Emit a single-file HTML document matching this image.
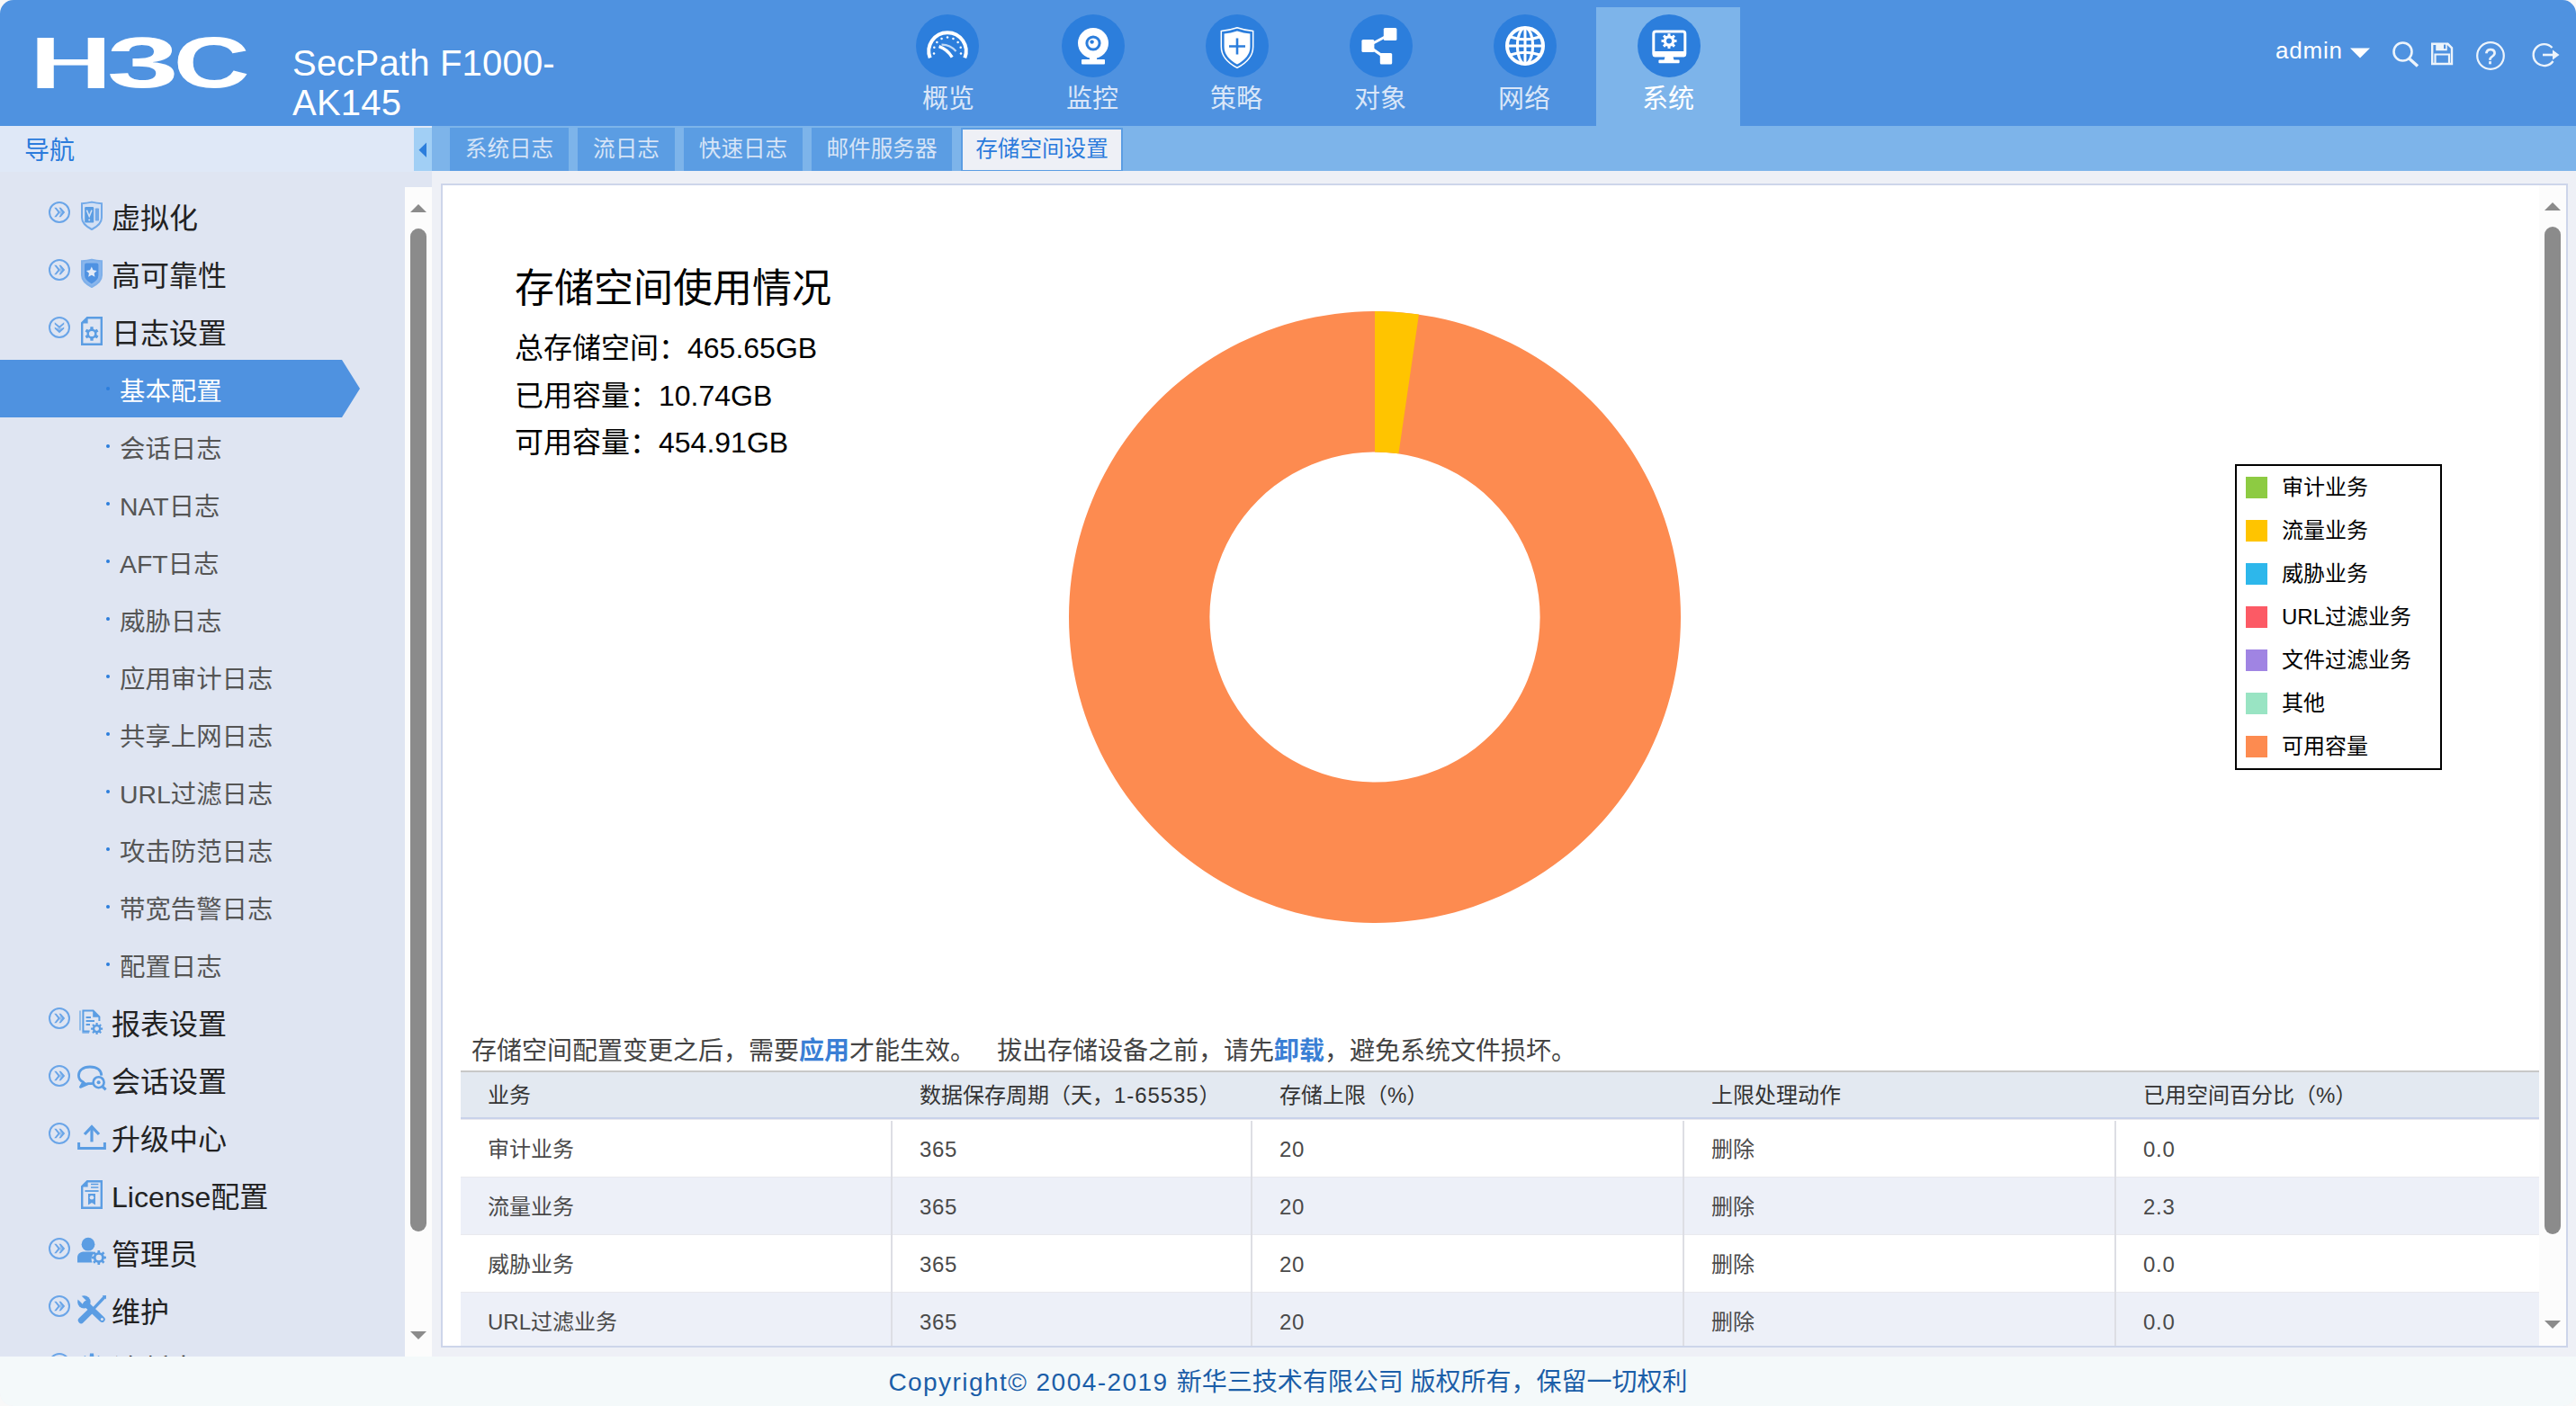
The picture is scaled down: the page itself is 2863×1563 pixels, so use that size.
<!DOCTYPE html>
<html lang="zh-CN">
<head>
<meta charset="utf-8">
<title>H3C SecPath F1000-AK145</title>
<style>
*{box-sizing:border-box;margin:0;padding:0}
html,body{width:2863px;height:1563px;overflow:hidden;background:#f8f8f8}
body{font-family:"Liberation Sans","Noto Sans CJK SC",sans-serif;color:#222}
#app{position:absolute;left:0;top:0;width:2863px;height:1563px;border-radius:15px;overflow:hidden;background:#eef0f6}
.abs{position:absolute}
/* header */
#hdr{position:absolute;left:0;top:0;width:2863px;height:140px;background:#4f92e0}
#prod{position:absolute;left:325px;top:48px;width:320px;font-size:40px;line-height:44px;color:#fff;letter-spacing:0.2px}
.nav{position:absolute;top:8px;width:160px;height:132px}
.nav.on{background:#7db4ea}
.nav .c{position:absolute;left:46px;top:8px;width:70px;height:70px;border-radius:50%;background:#2c7edc}
.nav .c svg{position:absolute;left:0;top:0;width:70px;height:70px}
.nav .t{position:absolute;left:0;top:82px;width:160px;text-align:center;font-size:29px;line-height:40px;color:#d9e6f8}
.nav.on .t{color:#fff}
#user{position:absolute;left:2529px;top:38px;letter-spacing:0.8px;font-size:26px;line-height:36px;color:#fff}
/* sub bars */
#navt{position:absolute;left:0;top:140px;width:480px;height:52px;background:#dfe8f7}
#navt span{position:absolute;left:27px;top:8px;font-size:28px;line-height:40px;color:#2b7bdc}
#coll{position:absolute;left:460px;top:142px;width:20px;height:48px;background:#a1cff5}
#tabs{position:absolute;left:480px;top:140px;width:2383px;height:50px;background:#7db4ea}
.tab{position:absolute;top:2px;height:48px;background:#5b9de3;color:#d6e4f7;font-size:24.6px;line-height:48px;text-align:center}
.tab.on{background:#eef0f6;color:#2b7bdc;border:2px solid #5b9de3;border-bottom-width:1px;line-height:44px}
/* sidebar */
#side{position:absolute;left:0;top:191px;width:480px;height:1317px;background:#dfe5f2;overflow:hidden}
#strack{position:absolute;left:450px;top:208px;width:30px;height:1300px;background:#fcfcfc}
.thumb{position:absolute;width:18px;border-radius:9px;background:#8b8b8b}
.row{position:absolute;left:0;width:450px;height:64px}
.row .lbl{position:absolute;left:124px;top:13px;font-size:32px;line-height:44px;color:#222;white-space:nowrap}
.row .ex{position:absolute;left:54px;top:16px;width:24px;height:24px}
.row .ic{position:absolute;left:84px;top:12px;width:36px;height:40px}
.sub .lbl{left:133px;top:15px;font-size:28.4px;line-height:40px;color:#555}
.sub .dot{position:absolute;left:118px;top:30px;width:4px;height:4px;border-radius:2px;background:#2c7edc}
.sub.on{background:none}
.sub.on .lbl{color:#fff}
/* panel */
#panel{position:absolute;left:490px;top:204px;width:2364px;height:1294px;border:2px solid #cdd5ea;background:#fff;overflow:hidden}
#ptrack{position:absolute;left:2822px;top:206px;width:30px;height:1290px;background:#fcfcfc}
.th{font-size:24px;line-height:52px;color:#333;white-space:nowrap}
.td.num{letter-spacing:0.7px}
.td{font-size:24px;line-height:68px;color:#4a4a4a;white-space:nowrap}
#note b{color:#3a7fd5}
#foot{position:absolute;left:0;top:1508px;width:2863px;height:55px;background:#f4f9fa;color:#1b5ea8;font-size:28px;line-height:58px;text-align:center}
</style>
</head>
<body>
<div id="app">
<div id="hdr">
<svg class="abs" style="left:30px;top:30px" width="260" height="80" viewBox="30 30 260 80"><defs><filter id="thin" x="-5%" y="-10%" width="110%" height="120%"><feMorphology operator="erode" radius="0 2"/></filter></defs><g font-family="'Liberation Sans',sans-serif" font-weight="bold" fill="#fff"><g filter="url(#thin)"><text transform="translate(33.0 100) scale(1.448 1)" font-size="87.5">H</text></g><text transform="translate(118.7 97.1) scale(1.816 1)" font-size="79.2">3</text><text transform="translate(192.8 97.2) scale(1.481 1)" font-size="79.4">C</text></g></svg>
<div id="prod">SecPath F1000-<br>AK145</div>
<div class="nav" style="left:974px"><div class="c" style="left:44px"><svg viewBox="0 0 70 70"><path d="M15.7 48.4 A20.7 20.7 0 1 1 54.3 48.4" fill="none" stroke="#fff" stroke-width="4"/><circle cx="20.03" cy="43.44" r="1.25" fill="#fff"/><circle cx="20.32" cy="36.87" r="1.25" fill="#fff"/><circle cx="23.36" cy="31.03" r="1.25" fill="#fff"/><circle cx="28.58" cy="27.02" r="1.25" fill="#fff"/><circle cx="35.00" cy="25.60" r="1.25" fill="#fff"/><circle cx="41.42" cy="27.02" r="1.25" fill="#fff"/><circle cx="46.64" cy="31.03" r="1.25" fill="#fff"/><circle cx="49.68" cy="36.87" r="1.25" fill="#fff"/><circle cx="49.97" cy="43.44" r="1.25" fill="#fff"/><path d="M40.2 47.6 Q34.5 38.5 25.6 35.6" fill="none" stroke="#fff" stroke-width="3.4"/><path d="M28.5 33.6 Q38 33.4 44.5 41" fill="none" stroke="#fff" stroke-width="2.2" opacity=".7"/></svg></div><div class="t">概览</div></div>
<div class="nav" style="left:1134px"><div class="c"><svg viewBox="0 0 70 70"><circle cx="35" cy="32" r="17" fill="#fff"/><circle cx="35" cy="32" r="8.6" fill="#2c7edc"/><circle cx="35" cy="32" r="5.6" fill="#fff"/><circle cx="33.6" cy="30.6" r="2.2" fill="#2c7edc"/><path d="M31 47 H39 V51 H31 Z" fill="#fff"/><rect x="22" y="50" width="26" height="5.4" rx="1" fill="#fff"/></svg></div><div class="t">监控</div></div>
<div class="nav" style="left:1294px"><div class="c"><svg viewBox="0 0 70 70"><path d="M17.3 18.6 Q27 17.6 35 14.8 Q43 17.6 52.7 18.6 V36 Q52.7 50 35 59.4 Q17.3 50 17.3 36 Z" fill="none" stroke="#fff" stroke-width="1.5"/><path d="M20.6 21.4 Q28 20.8 35 18.4 Q42 20.8 49.4 21.4 V36 Q49.4 47.6 35 55.6 Q20.6 47.6 20.6 36 Z" fill="#fff"/><path d="M35 26.5 V44.5 M26 35.5 H44" stroke="#2c7edc" stroke-width="2.6"/></svg></div><div class="t">策略</div></div>
<div class="nav" style="left:1454px"><div class="c"><svg viewBox="0 0 70 70"><path d="M45 22 L20.5 35 L40.5 49" fill="none" stroke="#fff" stroke-width="3"/><rect x="37.8" y="15" width="14.6" height="14" rx="1.6" fill="#fff"/><rect x="13.4" y="28" width="14" height="14" rx="1.6" fill="#fff"/><rect x="33.8" y="43" width="13.4" height="12.6" rx="1.6" fill="#fff"/></svg></div><div class="t">对象</div></div>
<div class="nav" style="left:1614px"><div class="c"><svg viewBox="0 0 70 70"><g fill="none" stroke="#fff"><circle cx="35" cy="35" r="20" stroke-width="4"/><ellipse cx="35" cy="35" rx="8.6" ry="20" stroke-width="3"/><path d="M35 15 V55 M15 35 H55" stroke-width="3"/><path d="M18.5 25 Q35 30.5 51.5 25 M18.5 45 Q35 39.5 51.5 45" stroke-width="3"/></g></svg></div><div class="t">网络</div></div>
<div class="nav on" style="left:1774px"><div class="c"><svg viewBox="0 0 70 70"><rect x="17.8" y="19" width="35" height="26.8" rx="2.4" fill="none" stroke="#fff" stroke-width="3"/><rect x="17" y="41" width="36.6" height="6.2" rx="2" fill="#fff"/><path d="M30.5 47 H39.5 L40.5 51 H29.5 Z" fill="#fff"/><rect x="23.4" y="50.6" width="23.2" height="3.6" rx="1" fill="#fff"/><path d="M33.52 21.13 L36.48 21.13 L36.45 23.57 L38.24 24.31 L39.95 22.56 L42.04 24.65 L40.29 26.36 L41.03 28.15 L43.47 28.12 L43.47 31.08 L41.03 31.05 L40.29 32.84 L42.04 34.55 L39.95 36.64 L38.24 34.89 L36.45 35.63 L36.48 38.07 L33.52 38.07 L33.55 35.63 L31.76 34.89 L30.05 36.64 L27.96 34.55 L29.71 32.84 L28.97 31.05 L26.53 31.08 L26.53 28.12 L28.97 28.15 L29.71 26.36 L27.96 24.65 L30.05 22.56 L31.76 24.31 L33.55 23.57 Z M32.0 29.6 a3.0 3.0 0 1 0 6.0 0 a3.0 3.0 0 1 0 -6.0 0 Z" fill="#fff" fill-rule="evenodd"/></svg></div><div class="t">系统</div></div>
<div id="user">admin</div>
<svg class="abs" style="left:2600px;top:36px" width="263" height="56" viewBox="2600 36 263 56"><path d="M2612 53.5 H2634 L2623 64.5 Z" fill="#fff"/><g opacity="0.9"><circle cx="2670.5" cy="57.5" r="10" fill="none" stroke="#fff" stroke-width="2.6"/><path d="M2677.5 65 L2687 73.5" stroke="#fff" stroke-width="3.4"/><path d="M2703.2 48.8 H2720.5 L2725 53.3 V71 H2703.2 Z" fill="none" stroke="#fff" stroke-width="2.4"/><path d="M2708 48.8 V55.5 H2719 V48.8" fill="#fff" stroke="#fff" stroke-width="1.5"/><rect x="2716" y="49.6" width="2.2" height="4.6" fill="#4f92e0"/><path d="M2706.5 71 V60.5 H2722 V71" fill="none" stroke="#fff" stroke-width="2.2"/><circle cx="2768" cy="62" r="14.8" fill="none" stroke="#fff" stroke-width="2.2"/><text x="2768" y="70.5" text-anchor="middle" font-family="'Liberation Sans',sans-serif" font-size="23" fill="#fff" stroke="#fff" stroke-width="0.6">?</text><path d="M2836.5 53 A12 12 0 1 0 2837.5 68" fill="none" stroke="#fff" stroke-width="2.4"/><path d="M2826 61 H2838" stroke="#fff" stroke-width="2.6"/><path d="M2837 55.5 L2844.5 61 L2837 66.5 Z" fill="#fff"/></g></svg>
</div>
<div id="navt"><span>导航</span></div>
<div id="coll"><svg width="20" height="48" viewBox="0 0 20 48"><path d="M5.5 24.7 L14 16.5 L14 33 Z" fill="#2c7edc"/></svg></div>
<div id="tabs">
<div class="tab" style="left:20px;width:132px">系统日志</div>
<div class="tab" style="left:162px;width:108px">流日志</div>
<div class="tab" style="left:280px;width:132px">快速日志</div>
<div class="tab" style="left:422px;width:156px">邮件服务器</div>
<div class="tab on" style="left:588px;width:180px">存储空间设置</div>
</div>
<div id="side">
<div class="row" style="top:17px"><svg class="ex" viewBox="0 0 24 24"><circle cx="12" cy="12" r="11" fill="none" stroke="#6aa5e8" stroke-width="2"/><path d="M6.2 6.8 L8.6 6.8 L13 12 L8.6 17.2 L6.2 17.2 L10.4 12 Z M11.4 6.8 L13.6 6.8 L18.2 12 L13.6 17.2 L11.4 17.2 L15.4 12 Z" fill="#6aa5e8"/><path d="M12.6 8 L17 12 L12.6 16 Z" fill="#6aa5e8" opacity=".55"/></svg><svg class="ic" viewBox="84 12 36 40"><path d="M91 18.2 Q96.5 18 102 16.6 Q107.5 18 113 18.2 V34 Q113 41.5 102 47 Q91 41.5 91 34 Z" fill="#d3e0f4" stroke="#72a9e8" stroke-width="2"/><rect x="94.2" y="22" width="10" height="17.6" rx="1.2" fill="#5b9de3"/><rect x="105.8" y="23.5" width="4.2" height="14" rx="0.8" fill="#72a9e8"/><path d="M96.4 25.6 L99.2 32.6 L102 25.6" stroke="#d3e0f4" stroke-width="1.5" fill="none"/><circle cx="99.2" cy="36.6" r="1" fill="#d3e0f4"/></svg><span class="lbl">虚拟化</span></div>
<div class="row" style="top:81px"><svg class="ex" viewBox="0 0 24 24"><circle cx="12" cy="12" r="11" fill="none" stroke="#6aa5e8" stroke-width="2"/><path d="M6.2 6.8 L8.6 6.8 L13 12 L8.6 17.2 L6.2 17.2 L10.4 12 Z M11.4 6.8 L13.6 6.8 L18.2 12 L13.6 17.2 L11.4 17.2 L15.4 12 Z" fill="#6aa5e8"/><path d="M12.6 8 L17 12 L12.6 16 Z" fill="#6aa5e8" opacity=".55"/></svg><svg class="ic" viewBox="84 12 36 40"><path d="M91 18.2 Q96.5 18 102 16.6 Q107.5 18 113 18.2 V34 Q113 41.5 102 47 Q91 41.5 91 34 Z" fill="#8ab6ec" stroke="#7fb0ea" stroke-width="2"/><path d="M94 22.4 Q94 20.4 96 20.4 H107.4 Q109.4 20.4 109.4 22.4 V34 Q109.4 39.4 101.8 43.4 Q94 39.4 94 34 Z" fill="#4f92e2"/><path d="M101.80 24.60 L103.56 28.37 L107.70 28.88 L104.65 31.73 L105.44 35.82 L101.80 33.80 L98.16 35.82 L98.95 31.73 L95.90 28.88 L100.04 28.37 Z" fill="#e3ebf8"/></svg><span class="lbl">高可靠性</span></div>
<div class="row" style="top:145px"><svg class="ex" viewBox="0 0 24 24"><circle cx="12" cy="12" r="11" fill="none" stroke="#6aa5e8" stroke-width="2"/><path d="M6.8 6.2 L6.8 8.6 L12 13 L17.2 8.6 L17.2 6.2 L12 10.4 Z M6.8 11.4 L6.8 13.6 L12 18.2 L17.2 13.6 L17.2 11.4 L12 15.4 Z" fill="#6aa5e8"/><path d="M8 12.6 L12 17 L16 12.6 Z" fill="#6aa5e8" opacity=".55"/></svg><svg class="ic" viewBox="84 12 36 40"><path d="M97 17.2 H112.8 V46.8 H91.2 V23 Z" fill="none" stroke="#5b9de3" stroke-width="2.4"/><path d="M90.6 23.6 L97.6 16.6 V23.6 Z" fill="#5b9de3"/><path d="M100.38 27.37 L103.62 27.37 L103.73 29.67 L105.75 30.84 L107.80 29.78 L109.42 32.59 L107.48 33.84 L107.48 36.16 L109.42 37.41 L107.80 40.22 L105.75 39.16 L103.73 40.33 L103.62 42.63 L100.38 42.63 L100.27 40.33 L98.25 39.16 L96.20 40.22 L94.58 37.41 L96.52 36.16 L96.52 33.84 L94.58 32.59 L96.20 29.78 L98.25 30.84 L100.27 29.67 Z M98.9 35 a3.1 3.1 0 1 0 6.2 0 a3.1 3.1 0 1 0 -6.2 0 Z" fill="#5b9de3" fill-rule="evenodd"/></svg><span class="lbl">日志设置</span></div>
<div class="row sub on" style="top:209px"><svg class="abs" style="left:0;top:0" width="400" height="64" viewBox="0 0 400 64"><path d="M0 0 H380 L400 32 L380 64 H0 Z" fill="#4f92e0"/></svg><i class="dot"></i><span class="lbl">基本配置</span></div>
<div class="row sub" style="top:273px"><i class="dot"></i><span class="lbl">会话日志</span></div>
<div class="row sub" style="top:337px"><i class="dot"></i><span class="lbl">NAT日志</span></div>
<div class="row sub" style="top:401px"><i class="dot"></i><span class="lbl">AFT日志</span></div>
<div class="row sub" style="top:465px"><i class="dot"></i><span class="lbl">威胁日志</span></div>
<div class="row sub" style="top:529px"><i class="dot"></i><span class="lbl">应用审计日志</span></div>
<div class="row sub" style="top:593px"><i class="dot"></i><span class="lbl">共享上网日志</span></div>
<div class="row sub" style="top:657px"><i class="dot"></i><span class="lbl">URL过滤日志</span></div>
<div class="row sub" style="top:721px"><i class="dot"></i><span class="lbl">攻击防范日志</span></div>
<div class="row sub" style="top:785px"><i class="dot"></i><span class="lbl">带宽告警日志</span></div>
<div class="row sub" style="top:849px"><i class="dot"></i><span class="lbl">配置日志</span></div>
<div class="row" style="top:913px"><svg class="ex" viewBox="0 0 24 24"><circle cx="12" cy="12" r="11" fill="none" stroke="#6aa5e8" stroke-width="2"/><path d="M6.2 6.8 L8.6 6.8 L13 12 L8.6 17.2 L6.2 17.2 L10.4 12 Z M11.4 6.8 L13.6 6.8 L18.2 12 L13.6 17.2 L11.4 17.2 L15.4 12 Z" fill="#6aa5e8"/><path d="M12.6 8 L17 12 L12.6 16 Z" fill="#6aa5e8" opacity=".55"/></svg><svg class="ic" viewBox="84 12 36 40"><path d="M89 19.4 V41.6 M91.4 44 H99" stroke="#5b9de3" stroke-width="1.4" fill="none" opacity=".8"/><path d="M99.6 42.4 H92.4 V19.6 H103.6 L110.4 26.4 V31" fill="none" stroke="#5b9de3" stroke-width="2"/><path d="M103.2 19.6 V26.8 H110.4 Z" fill="#5b9de3"/><path d="M95.6 27 H101 M95.6 31 H105 M95.6 35 H100" stroke="#5b9de3" stroke-width="1.8"/><path d="M106.57 33.08 L108.63 33.08 L108.72 34.93 L110.11 35.51 L111.48 34.26 L112.94 35.72 L111.69 37.09 L112.27 38.48 L114.12 38.57 L114.12 40.63 L112.27 40.72 L111.69 42.11 L112.94 43.48 L111.48 44.94 L110.11 43.69 L108.72 44.27 L108.63 46.12 L106.57 46.12 L106.48 44.27 L105.09 43.69 L103.72 44.94 L102.26 43.48 L103.51 42.11 L102.93 40.72 L101.08 40.63 L101.08 38.57 L102.93 38.48 L103.51 37.09 L102.26 35.72 L103.72 34.26 L105.09 35.51 L106.48 34.93 Z M105.19999999999999 39.6 a2.4 2.4 0 1 0 4.8 0 a2.4 2.4 0 1 0 -4.8 0 Z" fill="#5b9de3" fill-rule="evenodd"/></svg><span class="lbl">报表设置</span></div>
<div class="row" style="top:977px"><svg class="ex" viewBox="0 0 24 24"><circle cx="12" cy="12" r="11" fill="none" stroke="#6aa5e8" stroke-width="2"/><path d="M6.2 6.8 L8.6 6.8 L13 12 L8.6 17.2 L6.2 17.2 L10.4 12 Z M11.4 6.8 L13.6 6.8 L18.2 12 L13.6 17.2 L11.4 17.2 L15.4 12 Z" fill="#6aa5e8"/><path d="M12.6 8 L17 12 L12.6 16 Z" fill="#6aa5e8" opacity=".55"/></svg><svg class="ic" viewBox="84 12 36 40"><path d="M100 18 C92 18 87.4 22.2 87.4 27.4 C87.4 30.8 89.4 33.4 92.6 35 L89.4 40.4 L98 36.6 C100 36.8 101.6 36.8 103 36.4" fill="none" stroke="#5b9de3" stroke-width="2.8" stroke-linejoin="round"/><path d="M100 18 C108 18 112.6 22 112.8 27.6" fill="none" stroke="#5b9de3" stroke-width="2.8"/><path d="M89 40.6 L98 36.4 L93 34.6 Z" fill="#5b9de3"/><circle cx="109.6" cy="35.2" r="6" fill="#dfe5f2" stroke="#5b9de3" stroke-width="2.6"/><circle cx="109.6" cy="35.2" r="2" fill="#5b9de3"/><path d="M113.6 39.6 L117.6 43.4" stroke="#5b9de3" stroke-width="3"/></svg><span class="lbl">会话设置</span></div>
<div class="row" style="top:1041px"><svg class="ex" viewBox="0 0 24 24"><circle cx="12" cy="12" r="11" fill="none" stroke="#6aa5e8" stroke-width="2"/><path d="M6.2 6.8 L8.6 6.8 L13 12 L8.6 17.2 L6.2 17.2 L10.4 12 Z M11.4 6.8 L13.6 6.8 L18.2 12 L13.6 17.2 L11.4 17.2 L15.4 12 Z" fill="#6aa5e8"/><path d="M12.6 8 L17 12 L12.6 16 Z" fill="#6aa5e8" opacity=".55"/></svg><svg class="ic" viewBox="84 12 36 40"><path d="M102 20.4 V37.4" stroke="#5b9de3" stroke-width="3.2"/><path d="M94 29 L102 20.6 L110 29" fill="none" stroke="#5b9de3" stroke-width="3.2"/><path d="M87.6 38 V44.4 H116.4 V38" fill="none" stroke="#5b9de3" stroke-width="3"/></svg><span class="lbl">升级中心</span></div>
<div class="row" style="top:1105px"><svg class="ic" viewBox="84 12 36 40"><path d="M97 17.2 H112.8 V46.8 H91.2 V23 Z" fill="none" stroke="#5b9de3" stroke-width="2.4"/><path d="M90.6 23.6 L97.6 16.6 V23.6 Z" fill="#5b9de3"/><path d="M101 20.6 H109.4 M101 24 H109.4" stroke="#5b9de3" stroke-width="1.5"/><path d="M94.4 28 H109.6" stroke="#5b9de3" stroke-width="1.8"/><path d="M98 31 H106 V43.6 L102 41 L98 43.6 Z" fill="#5b9de3"/><circle cx="102" cy="35.2" r="2.3" fill="#dfe5f2"/></svg><span class="lbl">License配置</span></div>
<div class="row" style="top:1169px"><svg class="ex" viewBox="0 0 24 24"><circle cx="12" cy="12" r="11" fill="none" stroke="#6aa5e8" stroke-width="2"/><path d="M6.2 6.8 L8.6 6.8 L13 12 L8.6 17.2 L6.2 17.2 L10.4 12 Z M11.4 6.8 L13.6 6.8 L18.2 12 L13.6 17.2 L11.4 17.2 L15.4 12 Z" fill="#6aa5e8"/><path d="M12.6 8 L17 12 L12.6 16 Z" fill="#6aa5e8" opacity=".55"/></svg><svg class="ic" viewBox="84 12 36 40"><circle cx="98" cy="23.2" r="7.4" fill="#5b9de3"/><path d="M86 43.6 V38 C86 33 90 31.4 94 31.4 H101 C103.4 31.4 104.6 31.8 105.6 32.4 C101.6 34.6 100.6 40 102.6 43.6 Z" fill="#5b9de3"/><path d="M108.52 29.90 L111.08 29.90 L111.20 32.17 L112.93 32.88 L114.62 31.37 L116.43 33.18 L114.92 34.87 L115.63 36.60 L117.90 36.72 L117.90 39.28 L115.63 39.40 L114.92 41.13 L116.43 42.82 L114.62 44.63 L112.93 43.12 L111.20 43.83 L111.08 46.10 L108.52 46.10 L108.40 43.83 L106.67 43.12 L104.98 44.63 L103.17 42.82 L104.68 41.13 L103.97 39.40 L101.70 39.28 L101.70 36.72 L103.97 36.60 L104.68 34.87 L103.17 33.18 L104.98 31.37 L106.67 32.88 L108.40 32.17 Z M106.6 38 a3.2 3.2 0 1 0 6.4 0 a3.2 3.2 0 1 0 -6.4 0 Z" fill="#5b9de3" fill-rule="evenodd"/></svg><span class="lbl">管理员</span></div>
<div class="row" style="top:1233px"><svg class="ex" viewBox="0 0 24 24"><circle cx="12" cy="12" r="11" fill="none" stroke="#6aa5e8" stroke-width="2"/><path d="M6.2 6.8 L8.6 6.8 L13 12 L8.6 17.2 L6.2 17.2 L10.4 12 Z M11.4 6.8 L13.6 6.8 L18.2 12 L13.6 17.2 L11.4 17.2 L15.4 12 Z" fill="#6aa5e8"/><path d="M12.6 8 L17 12 L12.6 16 Z" fill="#6aa5e8" opacity=".55"/></svg><svg class="ic" viewBox="84 12 36 40"><path d="M116.6 17.4 L103.2 31.6" stroke="#5b9de3" stroke-width="3.4"/><path d="M113.6 16.2 L118 16 L117.8 20.4 Z" fill="#5b9de3"/><path d="M100.8 33.4 L90.2 43.8" stroke="#5b9de3" stroke-width="6.8" stroke-linecap="round"/><circle cx="93.4" cy="23.4" r="7.2" fill="#5b9de3"/><path d="M93.8 23.8 L84 14" stroke="#dfe5f2" stroke-width="5.6"/><path d="M95.6 25.6 L113.4 42.6" stroke="#5b9de3" stroke-width="6.6" stroke-linecap="round"/><circle cx="113.4" cy="42.6" r="1.5" fill="#dfe5f2"/></svg><span class="lbl">维护</span></div>
<div class="row" style="top:1297px"><svg class="ex" viewBox="0 0 24 24"><circle cx="12" cy="12" r="11" fill="none" stroke="#6aa5e8" stroke-width="2"/><path d="M6.2 6.8 L8.6 6.8 L13 12 L8.6 17.2 L6.2 17.2 L10.4 12 Z M11.4 6.8 L13.6 6.8 L18.2 12 L13.6 17.2 L11.4 17.2 L15.4 12 Z" fill="#6aa5e8"/><path d="M12.6 8 L17 12 L12.6 16 Z" fill="#6aa5e8" opacity=".55"/></svg><svg class="ic" viewBox="84 12 36 40"><path d="M99.97 16.56 L104.03 16.56 L104.29 19.87 L107.12 21.04 L109.64 18.88 L112.52 21.76 L110.36 24.28 L111.53 27.11 L114.84 27.37 L114.84 31.43 L111.53 31.69 L110.36 34.52 L112.52 37.04 L109.64 39.92 L107.12 37.76 L104.29 38.93 L104.03 42.24 L99.97 42.24 L99.71 38.93 L96.88 37.76 L94.36 39.92 L91.48 37.04 L93.64 34.52 L92.47 31.69 L89.16 31.43 L89.16 27.37 L92.47 27.11 L93.64 24.28 L91.48 21.76 L94.36 18.88 L96.88 21.04 L99.71 19.87 Z M97.8 29.4 a4.2 4.2 0 1 0 8.4 0 a4.2 4.2 0 1 0 -8.4 0 Z" fill="#5b9de3" fill-rule="evenodd"/></svg><span class="lbl">诊断中心</span></div>
</div>
<div id="strack">
<svg class="abs" style="left:6px;top:19px" width="18" height="9" viewBox="0 0 18 9"><path d="M0 9 L9 0 L18 9 Z" fill="#8b8b8b"/></svg>
<div class="thumb" style="left:6px;top:46px;height:1115px"></div>
<svg class="abs" style="left:6px;top:1272px" width="18" height="9" viewBox="0 0 18 9"><path d="M0 0 L9 9 L18 0 Z" fill="#8b8b8b"/></svg>
</div>
<div id="panel">
<div class="abs" id="ttl" style="left:80px;top:85px;font-size:44px;line-height:60px;color:#000;white-space:nowrap">存储空间使用情况</div>
<div class="abs inf" style="left:80px;top:155px;font-size:32px;line-height:52px;color:#000;white-space:nowrap">总存储空间：465.65GB</div>
<div class="abs inf" style="left:80px;top:208px;font-size:32px;line-height:52px;color:#000;white-space:nowrap">已用容量：10.74GB</div>
<div class="abs inf" style="left:80px;top:260px;font-size:32px;line-height:52px;color:#000;white-space:nowrap">可用容量：454.91GB</div>
<svg class="abs" style="left:0;top:0" width="2330" height="980" viewBox="492 206 2330 980"><path d="M1528 346 A340 340 0 1 1 1527.99 346 Z M1528 502.4 A183.6 183.6 0 1 0 1528.01 502.4 Z" fill="#fd8b50" fill-rule="evenodd"/><path d="M1528.00 346.00 A340 340 0 0 1 1576.96 349.54 L1554.44 504.31 A183.6 183.6 0 0 0 1528.00 502.40 Z" fill="#ffc400"/><rect x="2485" y="517" width="228" height="338" fill="#fff" stroke="#000" stroke-width="2"/><rect x="2496" y="530" width="24" height="24" fill="#8dcb42"/><text x="2536" y="550" font-size="24" fill="#000" font-family="'Liberation Sans','Noto Sans CJK SC',sans-serif">审计业务</text><rect x="2496" y="578" width="24" height="24" fill="#ffc400"/><text x="2536" y="598" font-size="24" fill="#000" font-family="'Liberation Sans','Noto Sans CJK SC',sans-serif">流量业务</text><rect x="2496" y="626" width="24" height="24" fill="#2db7eb"/><text x="2536" y="646" font-size="24" fill="#000" font-family="'Liberation Sans','Noto Sans CJK SC',sans-serif">威胁业务</text><rect x="2496" y="674" width="24" height="24" fill="#fc5a65"/><text x="2536" y="694" font-size="24" fill="#000" font-family="'Liberation Sans','Noto Sans CJK SC',sans-serif">URL过滤业务</text><rect x="2496" y="722" width="24" height="24" fill="#a084e3"/><text x="2536" y="742" font-size="24" fill="#000" font-family="'Liberation Sans','Noto Sans CJK SC',sans-serif">文件过滤业务</text><rect x="2496" y="770" width="24" height="24" fill="#99e4c3"/><text x="2536" y="790" font-size="24" fill="#000" font-family="'Liberation Sans','Noto Sans CJK SC',sans-serif">其他</text><rect x="2496" y="818" width="24" height="24" fill="#fd8b50"/><text x="2536" y="838" font-size="24" fill="#000" font-family="'Liberation Sans','Noto Sans CJK SC',sans-serif">可用容量</text></svg>
<div class="abs" id="note" style="left:32px;top:943px;font-size:28px;line-height:40px;color:#444;white-space:nowrap">存储空间配置变更之后，需要<b>应用</b>才能生效。<span style="display:inline-block;width:24px"></span>拔出存储设备之前，请先<b>卸载</b>，避免系统文件损坏。</div>
<div class="abs" style="left:20px;top:984px;width:2310px;height:54px;background:#e3e9f1;border-top:2px solid #c8c8c8;border-bottom:2px solid #c9d2ea"></div>
<div class="abs th" style="left:50px;top:986px">业务</div>
<div class="abs th" style="left:530px;top:986px">数据保存周期（天，<span style="letter-spacing:.9px">1-65535</span>）</div>
<div class="abs th" style="left:930px;top:986px">存储上限（%）</div>
<div class="abs th" style="left:1410px;top:986px">上限处理动作</div>
<div class="abs th" style="left:1890px;top:986px">已用空间百分比（%）</div>
<div class="abs" style="left:20px;top:1038px;width:2310px;height:64px;background:#fff;border-top:1px solid #e9e9ee"></div>
<div class="abs td" style="left:50px;top:1038px">审计业务</div>
<div class="abs td num" style="left:530px;top:1038px">365</div>
<div class="abs td num" style="left:930px;top:1038px">20</div>
<div class="abs td" style="left:1410px;top:1038px">删除</div>
<div class="abs td num" style="left:1890px;top:1038px">0.0</div>
<div class="abs" style="left:20px;top:1102px;width:2310px;height:64px;background:#edf0f8;border-top:1px solid #e9e9ee"></div>
<div class="abs td" style="left:50px;top:1102px">流量业务</div>
<div class="abs td num" style="left:530px;top:1102px">365</div>
<div class="abs td num" style="left:930px;top:1102px">20</div>
<div class="abs td" style="left:1410px;top:1102px">删除</div>
<div class="abs td num" style="left:1890px;top:1102px">2.3</div>
<div class="abs" style="left:20px;top:1166px;width:2310px;height:64px;background:#fff;border-top:1px solid #e9e9ee"></div>
<div class="abs td" style="left:50px;top:1166px">威胁业务</div>
<div class="abs td num" style="left:530px;top:1166px">365</div>
<div class="abs td num" style="left:930px;top:1166px">20</div>
<div class="abs td" style="left:1410px;top:1166px">删除</div>
<div class="abs td num" style="left:1890px;top:1166px">0.0</div>
<div class="abs" style="left:20px;top:1230px;width:2310px;height:64px;background:#edf0f8;border-top:1px solid #e9e9ee"></div>
<div class="abs td" style="left:50px;top:1230px">URL过滤业务</div>
<div class="abs td num" style="left:530px;top:1230px">365</div>
<div class="abs td num" style="left:930px;top:1230px">20</div>
<div class="abs td" style="left:1410px;top:1230px">删除</div>
<div class="abs td num" style="left:1890px;top:1230px">0.0</div>
<div class="abs" style="left:498px;top:1040px;width:2px;height:260px;background:#dddee4"></div>
<div class="abs" style="left:898px;top:1040px;width:2px;height:260px;background:#dddee4"></div>
<div class="abs" style="left:1378px;top:1040px;width:2px;height:260px;background:#dddee4"></div>
<div class="abs" style="left:1858px;top:1040px;width:2px;height:260px;background:#dddee4"></div>
</div>
<div id="ptrack">
<svg class="abs" style="left:6px;top:19px" width="18" height="9" viewBox="0 0 18 9"><path d="M0 9 L9 0 L18 9 Z" fill="#8b8b8b"/></svg>
<div class="thumb" style="left:6px;top:46px;height:1120px"></div>
<svg class="abs" style="left:6px;top:1262px" width="18" height="9" viewBox="0 0 18 9"><path d="M0 0 L9 9 L18 0 Z" fill="#8b8b8b"/></svg>
</div>
<div id="foot"><span style="letter-spacing:1.45px">Copyright© 2004-2019 </span>新华三技术有限公司 版权所有，保留一切权利</div>
</div>
</body>
</html>
